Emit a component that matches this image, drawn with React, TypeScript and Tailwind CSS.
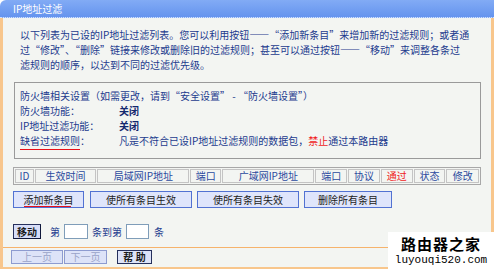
import React from 'react';

const cols = [
  { label: 'ID', w: 'w-[19px]' },
  { label: '生效时间', w: 'w-[62px]' },
  { label: '局域网IP地址', w: 'w-[93px]' },
  { label: '端口', w: 'w-[31px]' },
  { label: '广域网IP地址', w: 'w-[93px]' },
  { label: '端口', w: 'w-[32px]' },
  { label: '协议', w: 'w-[32px]' },
  { label: '通过', w: 'w-[32px]', red: true },
  { label: '状态', w: 'w-[32px]' },
  { label: '修改', w: 'w-[33px]' },
];

const font = { fontFamily: '"Noto Sans CJK SC", "Liberation Sans", sans-serif' };

const App = () => {
  return (
    <div
      lang="zh-CN"
      className="relative w-[494px] h-[271px] overflow-hidden bg-white text-[10px] leading-[15px]"
      style={font}
    >
      {/* title bar */}
      <div className="h-[18px] rounded-tl-[6px] bg-gradient-to-b from-[#82abf5] to-[#6594ee] border-b border-dotted border-[#cfe0ff] pl-[13px] text-white leading-[17px]">
        IP地址过滤
      </div>

      <div className="h-[251px] bg-[#f3f5f2] border-x-[3px] border-b-[2px] border-[#f8c68c] flex flex-col">
        <div className="pl-[17px] pt-[9px] text-[#1d3b8e] whitespace-nowrap">
          <div>以下列表为已设的IP地址过滤列表。您可以利用按钮——“添加新条目”来增加新的过滤规则；或者通</div>
          <div>过“修改”、“删除”链接来修改或删除旧的过滤规则；甚至可以通过按钮——“移动”来调整各条过</div>
          <div>滤规则的顺序，以达到不同的过滤优先级。</div>
        </div>

        {/* firewall info */}
        <div className="ml-[11px] mt-[10px] w-[467px] h-[77px] border border-[#9a9a9a] pl-[5px] pt-[5px] text-[#1d3b8e] whitespace-nowrap">
          <div>防火墙相关设置（如需更改，请到“安全设置” - “防火墙设置”）</div>
          <div className="flex">
            <span className="w-[99px]">防火墙功能：</span>
            <span className="font-bold text-[#14286e]">关闭</span>
          </div>
          <div className="flex">
            <span className="w-[99px]">IP地址过滤功能：</span>
            <span className="font-bold text-[#14286e]">关闭</span>
          </div>
          <div className="flex">
            <span className="w-[99px]">
              <span className="border-b border-[#e8101a] pb-[1px]">缺省过滤规则</span>：
            </span>
            <span>
              凡是不符合已设IP地址过滤规则的数据包，<span className="text-[#f01c1c]">禁止</span>通过本路由器
            </span>
          </div>
        </div>

        {/* table header */}
        <div className="ml-[10px] mt-[8px] w-[468px] h-[18px] border border-[#a8a8a8] p-px flex gap-px">
          {cols.map((c, i) => (
            <div
              key={i}
              className={`${c.w} h-full border border-[#c4c4c4] flex items-center justify-center leading-none ${
                c.red ? 'text-[#f01c1c]' : 'text-[#2b4a9e]'
              }`}
            >
              {c.label}
            </div>
          ))}
        </div>

        {/* action buttons */}
        <div className="ml-[10px] mt-[6px] flex items-center text-[#222]">
          <div className="relative w-[71px] h-[17px] border border-[#5272d2] bg-[#dfe5fb] flex items-center justify-center leading-none">
            添加新条目
            <div className="absolute left-[10px] right-[12px] bottom-0 h-px bg-[#e8101a]" />
          </div>
          <div className="ml-[6px] w-[102px] h-[17px] border border-[#5272d2] bg-[#dfe5fb] flex items-center justify-center leading-none">
            使所有条目生效
          </div>
          <div className="ml-[5px] w-[102px] h-[17px] border border-[#5272d2] bg-[#dfe5fb] flex items-center justify-center leading-none">
            使所有条目失效
          </div>
          <div className="ml-[5px] w-[88px] h-[17px] border border-[#5272d2] bg-[#dfe5fb] flex items-center justify-center leading-none">
            删除所有条目
          </div>
        </div>

        {/* move row */}
        <div className="ml-[10px] mt-[16px] flex items-center text-[#1d3b8e] leading-none">
          <div className="w-[28px] h-[15px] border border-[#26305c] border-b-[#10183a] border-r-[#10183a] bg-[#d7def8] flex items-center justify-center font-bold text-[#1a1a1a]">
            移动
          </div>
          <span className="ml-[9px]">第</span>
          <div className="ml-[4px] w-[24px] h-[15px] border border-[#7f9db9] bg-white" />
          <span className="ml-[4px]">条到第</span>
          <div className="ml-[4px] w-[23px] h-[15px] border border-[#7f9db9] bg-white" />
          <span className="ml-[5px]">条</span>
        </div>

        {/* pager */}
        <div className="mt-[8px] border-t border-[#f6b36c] pt-[2px] pl-[8px] flex items-center leading-none">
          <div className="w-[52px] h-[14px] border border-[#8d9bd0] bg-[#dde3f8] flex items-center justify-center text-[#9aa4c8]">
            上一页
          </div>
          <div className="ml-[1px] w-[43px] h-[14px] border border-[#8d9bd0] bg-[#dde3f8] flex items-center justify-center text-[#9aa4c8]">
            下一页
          </div>
          <div className="ml-[10px] w-[35px] h-[14px] border border-[#26305c] bg-[#dde3f8] flex items-center justify-center font-bold text-[#1a1a1a]">
            帮&nbsp;助
          </div>
        </div>
      </div>

      {/* watermark */}
      <div className="absolute right-0 bottom-0 w-[106px] h-[39px] bg-white flex flex-col items-center pt-[3px]">
        <div className="h-[18px] text-[15px] leading-[18px] font-bold text-black tracking-[1px]">路由器之家</div>
        <div
          className="h-[14px] text-[11px] leading-[14px] text-black"
          style={{ fontFamily: '"Liberation Mono", monospace' }}
        >
          luyouqi520.com
        </div>
      </div>
    </div>
  );
};

export default App;
